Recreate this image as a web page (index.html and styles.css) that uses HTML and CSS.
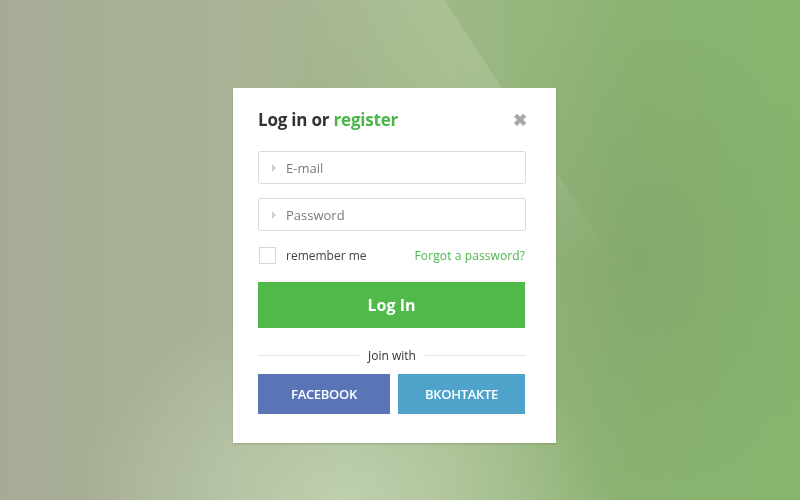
FILE: index.html
```html
<!DOCTYPE html>
<html lang="en">
<head>
    <meta charset="UTF-8">
    <meta name="viewport" content="width=device-width, initial-scale=1.0">
    <title>Log in</title>
    <link rel="stylesheet" href="styles.css">
</head>
<body>
    <div class="page">
        <div class="login-box">
            <div class="login-head">
                <h2>Log in or <a href="#">register</a></h2>
                <span class="close">&#10006;</span>
            </div>

            <div class="field">
                <span class="arrow"></span>
                <input type="text" placeholder="E-mail">
            </div>
            <div class="field">
                <span class="arrow"></span>
                <input type="password" placeholder="Password">
            </div>

            <div class="options">
                <label class="remember"><span class="check"></span>remember me</label>
                <a href="#" class="forgot">Forgot a password?</a>
            </div>

            <button class="login-btn">Log In</button>

            <div class="divider"><span>Join with</span></div>

            <div class="social">
                <a href="#" class="fb">FACEBOOK</a>
                <a href="#" class="vk">ВКОНТАКТЕ</a>
            </div>
        </div>
    </div>
</body>
</html>
```

FILE: styles.css
```css
html, body {
    margin: 0;
    height: 100%;
}
body {
    font-family: "Open Sans", Arial, sans-serif;
    background-color: #98b07e;
    background-image:
        radial-gradient(ellipse 260px 200px at 340px 500px, rgba(195,212,180,0.85), rgba(195,212,180,0)),
        radial-gradient(ellipse 200px 260px at 640px 260px, rgba(120,150,100,0.35), rgba(120,150,100,0)),
        linear-gradient(90deg, #a6ab96 0%, #a9b395 30%, #9fb886 55%, #8bb372 80%, #86b56d 100%);
    overflow: hidden;
}
/* light diagonal sheen in the top right, fades out downwards */
body::before {
    content: "";
    position: fixed;
    left: 0;
    top: 0;
    width: 100%;
    height: 100%;
    background: linear-gradient(57deg, rgba(255,255,255,0) 52%, rgba(255,255,255,0.13) 68.4%, rgba(255,255,255,0) 68.4%);
    -webkit-mask-image: linear-gradient(180deg, #000 0%, #000 20%, transparent 55%);
    mask-image: linear-gradient(180deg, #000 0%, #000 20%, transparent 55%);
    pointer-events: none;
}
.page {
    position: relative;
    padding-top: 88px;
    padding-left: 233px;
}
.login-box {
    width: 323px;
    height: 355px;
    box-sizing: border-box;
    background: #fff;
    padding: 0 30px 0 25px;
    box-shadow: 0 1px 2px rgba(60,80,40,0.25);
}
.login-head {
    display: flex;
    justify-content: space-between;
    align-items: center;
    height: 63px;
}
.login-head h2 {
    margin: 0;
    font-size: 17px;
    font-weight: 700;
    letter-spacing: -0.2px;
    color: #333;
}
.login-head h2 a {
    color: #4bb548;
    text-decoration: none;
}
.close {
    color: #a8a8a8;
    font-size: 17px;
    font-weight: bold;
    margin-right: -1px;
    cursor: pointer;
}
.field {
    display: flex;
    align-items: center;
    height: 33px;
    box-sizing: border-box;
    border: 1px solid #dcdcdc;
    border-radius: 2px;
    margin-bottom: 14px;
    padding-left: 13px;
}
.field + .field {
    margin-bottom: 0;
}
.arrow {
    width: 0;
    height: 0;
    border-top: 4px solid transparent;
    border-bottom: 4px solid transparent;
    border-left: 4px solid #cfcfcf;
    margin-right: 10px;
}
.field input {
    border: none;
    outline: none;
    font-family: "Open Sans", Arial, sans-serif;
    font-size: 13px;
    color: #333;
    flex: 1;
    padding: 0;
}
.field input::placeholder {
    color: #7a7a7a;
}
.options {
    display: flex;
    justify-content: space-between;
    align-items: center;
    height: 17px;
    margin-top: 16px;
    margin-bottom: 18px;
}
.remember {
    display: flex;
    align-items: center;
    font-size: 12px;
    color: #444;
}
.check {
    width: 15px;
    height: 15px;
    border: 1px solid #d8d8d8;
    margin-left: 1px;
    margin-right: 10px;
}
.forgot {
    font-size: 12px;
    letter-spacing: 0.1px;
    color: #4bb548;
    text-decoration: none;
    margin-right: 1px;
}
.login-btn {
    display: block;
    width: 267px;
    height: 46px;
    border: none;
    background: #50b94a;
    color: #fff;
    font-family: "Open Sans", Arial, sans-serif;
    font-size: 16px;
    font-weight: 700;
    cursor: pointer;
}
.divider {
    display: flex;
    align-items: center;
    margin-top: 19px;
    width: 268px;
    font-size: 12px;
    color: #333;
}
.divider::before,
.divider::after {
    content: "";
    flex: 1;
    height: 1px;
    background: #e6e6e6;
}
.divider span {
    padding: 0 9px;
}
.social {
    display: flex;
    gap: 8px;
    margin-top: 10px;
    width: 267px;
}
.social a {
    display: flex;
    align-items: center;
    justify-content: center;
    height: 40px;
    color: #fff;
    text-decoration: none;
    font-size: 13px;
    font-weight: 600;
    letter-spacing: -0.3px;
}
.fb {
    width: 132px;
    background: #5a75b6;
}
.vk {
    flex: 1;
    background: #4fa3cb;
}
```
